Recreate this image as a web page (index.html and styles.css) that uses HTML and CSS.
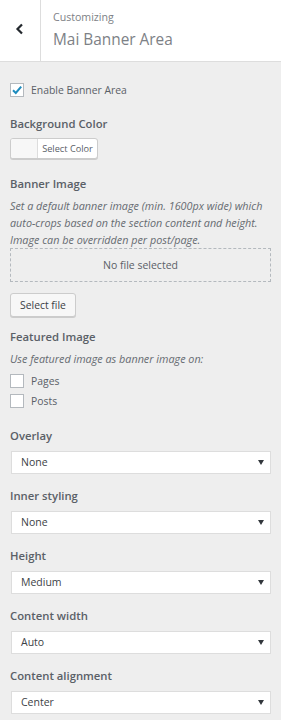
FILE: index.html
```html
<!DOCTYPE html>
<html lang="en">
<head>
  <meta charset="UTF-8">
  <meta name="viewport" content="width=device-width, initial-scale=1.0">
  <title>Mai Banner Area</title>
  <link rel="stylesheet" href="styles.css">
</head>
<body>
  <div class="painel">
    <div class="cabecalho">
      <button class="btn-voltar" aria-label="Back">
        <svg width="10" height="12" viewBox="0 0 10 12">
          <path d="M7 1.5 L2.5 6 L7 10.5" fill="none" stroke="#23282d" stroke-width="2.2"/>
        </svg>
      </button>
      <div class="titulo">
        <span class="titulo-pequeno">Customizing</span>
        <span class="titulo-grande">Mai Banner Area</span>
      </div>
    </div>

    <div class="conteudo">
      <label class="linha-check primeira">
        <span class="caixa marcada">
          <svg width="12" height="12" viewBox="0 0 12 12">
            <path d="M2 6.2 L4.8 9 L10.2 2.6" fill="none" stroke="#1e8cbe" stroke-width="2"/>
          </svg>
        </span>
        Enable Banner Area
      </label>

      <div class="rotulo r-cor">Background Color</div>
      <div class="btn-cor">
        <span class="amostra"></span>
        <span class="texto-cor">Select Color</span>
      </div>

      <div class="rotulo r-banner">Banner Image</div>
      <p class="descricao">Set a default banner image (min. 1600px wide) which auto-crops based on the section content and height. Image can be overridden per post/page.</p>
      <div class="arquivo-vazio">No file selected</div>
      <button class="btn-arquivo">Select file</button>

      <div class="rotulo r-destaque">Featured Image</div>
      <p class="descricao desc-curta">Use featured image as banner image on:</p>
      <label class="linha-check item"><span class="caixa"></span>Pages</label>
      <label class="linha-check item"><span class="caixa"></span>Posts</label>

      <div class="campo campo-primeiro">
        <div class="rotulo">Overlay</div>
        <div class="seletor">None</div>
      </div>
      <div class="campo">
        <div class="rotulo">Inner styling</div>
        <div class="seletor">None</div>
      </div>
      <div class="campo">
        <div class="rotulo">Height</div>
        <div class="seletor">Medium</div>
      </div>
      <div class="campo">
        <div class="rotulo">Content width</div>
        <div class="seletor">Auto</div>
      </div>
      <div class="campo">
        <div class="rotulo">Content alignment</div>
        <div class="seletor">Center</div>
      </div>
    </div>
  </div>
</body>
</html>
```

FILE: styles.css
```css
:root {
  --fundo: #eeeeee;
  --branco: #ffffff;
  --borda: #dddddd;
  --texto: #5a6067;
  --texto-escuro: #3c4146;
  --cinza-titulo: #7d8186;
}

* {
  box-sizing: border-box;
}

body {
  margin: 0;
  background-color: var(--fundo);
  font-family: 'Open Sans', 'Noto Sans', sans-serif;
  color: var(--texto);
  font-size: 10.4px;
}

/* Cabeçalho */
.cabecalho {
  display: flex;
  height: 62px;
  background-color: var(--branco);
  border-bottom: 1px solid var(--borda);
}

.btn-voltar {
  width: 41px;
  height: 61px;
  padding: 0 0 4px 0;
  border: none;
  border-right: 1px solid var(--borda);
  background: transparent;
  display: flex;
  align-items: center;
  justify-content: center;
}

.titulo {
  display: flex;
  flex-direction: column;
  padding: 9px 0 0 12px;
}

.titulo-pequeno {
  font-size: 10.6px;
  line-height: 17px;
  color: var(--cinza-titulo);
}

.titulo-grande {
  font-size: 15.4px;
  line-height: 28px;
  color: var(--cinza-titulo);
}

/* Conteúdo */
.conteudo {
  padding: 0 10px;
}

.linha-check {
  display: flex;
  align-items: center;
  gap: 7px;
  font-size: 10.4px;
  line-height: 20px;
  color: var(--texto);
}

.linha-check.primeira {
  margin-top: 18px;
}

.caixa {
  width: 14px;
  height: 14px;
  background-color: var(--branco);
  border: 1px solid #b4b9be;
  display: flex;
  align-items: center;
  justify-content: center;
  flex-shrink: 0;
}

.rotulo {
  font-size: 11.3px;
  font-weight: 600;
  line-height: 20px;
  color: var(--texto);
}

.r-cor {
  margin-top: 14px;
}

.btn-cor {
  display: flex;
  width: 88px;
  height: 21px;
  margin-top: 4px;
  border: 1px solid #cccccc;
  border-radius: 3px;
  background-color: var(--branco);
  box-shadow: 0 1px 0 #cccccc;
  overflow: hidden;
}

.amostra {
  width: 27px;
  background-color: #f7f7f7;
  border-right: 1px solid #dddddd;
}

.texto-cor {
  flex: 1;
  font-size: 9.2px;
  line-height: 19px;
  text-align: center;
  color: var(--texto);
}

.r-banner {
  margin-top: 15px;
}

.descricao {
  margin: 3px 0 0 0;
  font-size: 10.8px;
  font-style: italic;
  line-height: 17px;
  color: #666b71;
}

.arquivo-vazio {
  height: 34px;
  border: 1px dashed #b4b9be;
  text-align: center;
  line-height: 32px;
  font-size: 10.5px;
  color: var(--texto);
}

.btn-arquivo {
  display: block;
  margin-top: 11px;
  height: 24px;
  padding: 0 9px;
  font-family: inherit;
  font-size: 10.4px;
  color: var(--texto-escuro);
  background-color: #f7f7f7;
  border: 1px solid #cccccc;
  border-radius: 3px;
  box-shadow: 0 1px 0 #cccccc;
}

.r-destaque {
  margin-top: 10px;
}

.desc-curta {
  margin-bottom: 4px;
}

.linha-check.item {
  height: 20px;
}

.campo {
  margin-top: 12px;
}

.campo-primeiro {
  margin-top: 15px;
}

.seletor {
  position: relative;
  margin-top: 5px;
  margin-left: 1px;
  height: 23px;
  padding-left: 9px;
  line-height: 21px;
  font-size: 10.5px;
  color: var(--texto-escuro);
  background-color: var(--branco);
  border: 1px solid var(--borda);
}

/* setinha do select */
.seletor::after {
  content: "";
  position: absolute;
  right: 6px;
  top: 8px;
  border-left: 3px solid transparent;
  border-right: 3px solid transparent;
  border-top: 5px solid #32373c;
}
```
